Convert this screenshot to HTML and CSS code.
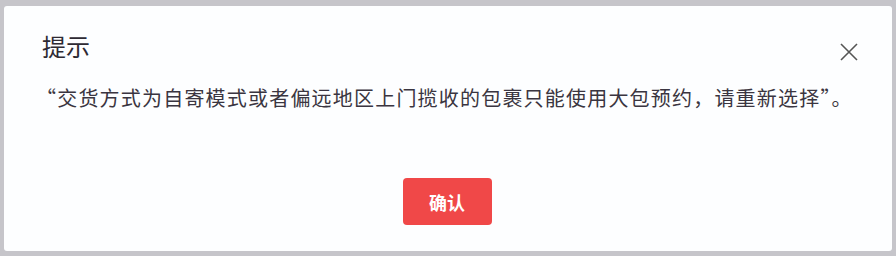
FILE: index.html
```html
<!DOCTYPE html>
<html lang="zh-CN">
<head>
<meta charset="utf-8">
<link rel="stylesheet" href="styles.css">
</head>
<body>
<div class="overlay">
  <div class="dialog">
    <div class="header">
      <div class="title">提示</div>
      <button class="close" aria-label="关闭">
        <svg width="18" height="18" viewBox="0 0 18 18"><path d="M1 1L17 17M17 1L1 17" stroke="#555" stroke-width="1.6" fill="none"/></svg>
      </button>
    </div>
    <div class="message">“交货方式为自寄模式或者偏远地区上门揽收的包裹只能使用大包预约，请重新选择”。</div>
    <div class="footer">
      <button class="confirm">确认</button>
    </div>
  </div>
</div>
</body>
</html>
```
FILE: styles.css
```css
html, body {
  margin: 0;
  padding: 0;
  width: 896px;
  height: 256px;
  overflow: hidden;
  font-family: "Noto Sans CJK SC", "Noto Sans", sans-serif;
}
.overlay {
  width: 896px;
  height: 256px;
  background: #c6c5ca;
  padding: 6px 4px 5px 4px;
  box-sizing: border-box;
  display: flex;
}
.dialog {
  flex: 1;
  background: #fdfeff;
  border-radius: 3px;
  box-sizing: border-box;
  padding: 25px 34px 0 38px;
  display: flex;
  flex-direction: column;
}
.header {
  display: flex;
  justify-content: space-between;
  align-items: flex-start;
  height: 53px;
}
.title {
  font-size: 24px;
  line-height: 30px;
  color: #2e2a33;
  padding-left: 0;
}
.close {
  border: 0;
  background: none;
  padding: 0;
  margin-top: 12px;
  width: 18px;
  height: 18px;
}
.close svg { display: block; }
.message {
  font-size: 20px;
  line-height: 28px;
  color: #3a3540;
  letter-spacing: 1.2px;
  margin-left: -6px;
}
.footer {
  display: flex;
  justify-content: center;
  margin-top: 66px;
  padding-right: 6px;
}
.confirm {
  width: 89px;
  height: 47px;
  border: 0;
  border-radius: 4px;
  background: #f04848;
  color: #fff;
  font-family: inherit;
  font-size: 18px;
  font-weight: 700;
}
```
